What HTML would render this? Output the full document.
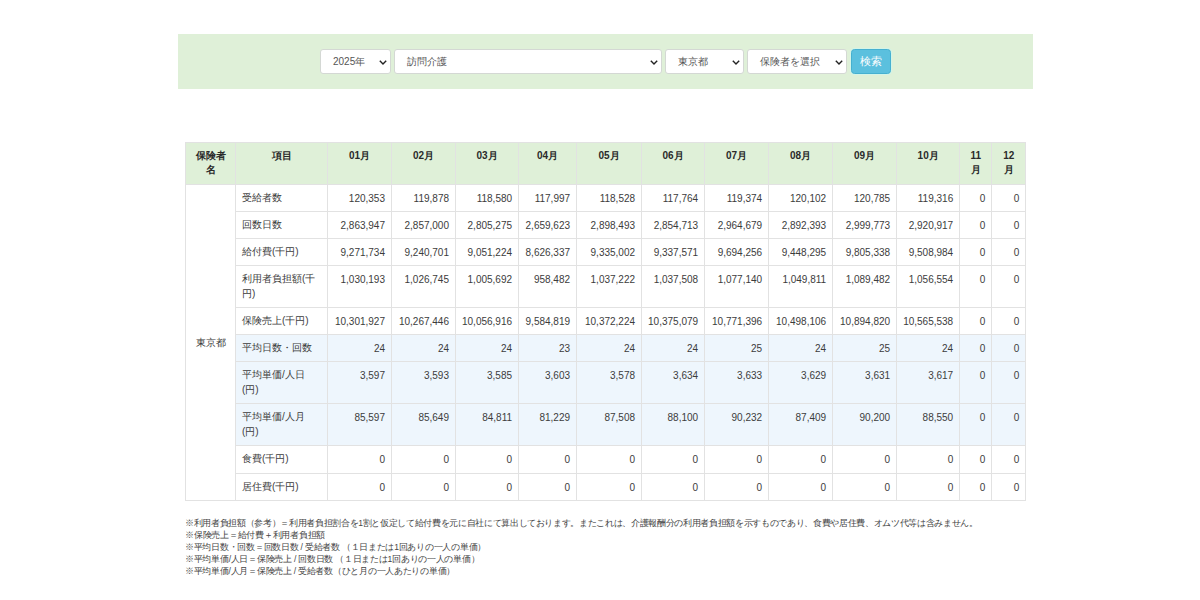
<!DOCTYPE html>
<html><head><meta charset="utf-8">
<style>
*{box-sizing:border-box;margin:0;padding:0}
html,body{width:1200px;height:600px;background:#fff;overflow:hidden}
body{font-family:"Liberation Sans",sans-serif;color:#3c3c3c;position:relative}
.bar{position:absolute;left:178px;top:34px;width:855px;height:55px;background:#dff0d8}
.sel{position:absolute;top:49px;height:25px;background:#fff;border:1px solid #d4d8d4;border-radius:3px;font-size:10px;line-height:23px;color:#555;padding-left:12px;white-space:nowrap}
.sel svg{position:absolute;right:3px;top:9.5px}
.btn{position:absolute;left:851px;top:49px;width:40px;height:25px;background:#5bc0de;border:1px solid #46b0d0;border-radius:3.5px;box-shadow:0 0 0 1px rgba(205,245,240,.7);color:#fff;font-size:10.5px;line-height:23px;text-align:center}
table{position:absolute;left:185px;top:142px;border-collapse:collapse;table-layout:fixed;font-size:10px;line-height:15px}
td,th{border:1px solid #e2e2e2;padding:6px 6px 0 6px;vertical-align:top;overflow:hidden}
th{background:#dff0d8;text-align:center;font-weight:bold;color:#2a2a2a;line-height:14px;padding-top:5.5px}
td.n{text-align:right}
td.l{padding-top:5px}
tr.b td.c{background:#eef6fd}
td.p{text-align:center;vertical-align:middle;padding:0 6px 1px}
.notes{position:absolute;left:185px;top:516.5px;font-size:8.57px;line-height:12.15px;color:#444;white-space:nowrap}
</style></head><body>
<div class="bar"></div>

<div class="sel" style="left:320px;width:71px">2025年<svg width="8" height="5" viewBox="0 0 8 5"><path d="M0.8 0.8 L4 4 L7.2 0.8" fill="none" stroke="#222" stroke-width="1.4"/></svg></div>
<div class="sel" style="left:394px;width:268px">訪問介護<svg width="8" height="5" viewBox="0 0 8 5"><path d="M0.8 0.8 L4 4 L7.2 0.8" fill="none" stroke="#222" stroke-width="1.4"/></svg></div>
<div class="sel" style="left:665px;width:79px">東京都<svg width="8" height="5" viewBox="0 0 8 5"><path d="M0.8 0.8 L4 4 L7.2 0.8" fill="none" stroke="#222" stroke-width="1.4"/></svg></div>
<div class="sel" style="left:747px;width:100px">保険者を選択<svg width="8" height="5" viewBox="0 0 8 5"><path d="M0.8 0.8 L4 4 L7.2 0.8" fill="none" stroke="#222" stroke-width="1.4"/></svg></div>
<div class="btn">検索</div>
<table><colgroup><col style="width:50px"><col style="width:92px"><col style="width:64px"><col style="width:64px"><col style="width:63px"><col style="width:58px"><col style="width:65px"><col style="width:63px"><col style="width:64px"><col style="width:64px"><col style="width:64px"><col style="width:63px"><col style="width:32px"><col style="width:34px"></colgroup>
<tr style="height:42px"><th>保険者<br>名</th><th>項目</th><th>01月</th><th>02月</th><th>03月</th><th>04月</th><th>05月</th><th>06月</th><th>07月</th><th>08月</th><th>09月</th><th>10月</th><th>11<br>月</th><th>12<br>月</th></tr>
<tr style="height:27px"><td class="p" rowspan="10">東京都</td><td class="c l">受給者数</td><td class="n c">120,353</td><td class="n c">119,878</td><td class="n c">118,580</td><td class="n c">117,997</td><td class="n c">118,528</td><td class="n c">117,764</td><td class="n c">119,374</td><td class="n c">120,102</td><td class="n c">120,785</td><td class="n c">119,316</td><td class="n c">0</td><td class="n c">0</td></tr>
<tr style="height:27px"><td class="c l">回数日数</td><td class="n c">2,863,947</td><td class="n c">2,857,000</td><td class="n c">2,805,275</td><td class="n c">2,659,623</td><td class="n c">2,898,493</td><td class="n c">2,854,713</td><td class="n c">2,964,679</td><td class="n c">2,892,393</td><td class="n c">2,999,773</td><td class="n c">2,920,917</td><td class="n c">0</td><td class="n c">0</td></tr>
<tr style="height:27px"><td class="c l">給付費(千円)</td><td class="n c">9,271,734</td><td class="n c">9,240,701</td><td class="n c">9,051,224</td><td class="n c">8,626,337</td><td class="n c">9,335,002</td><td class="n c">9,337,571</td><td class="n c">9,694,256</td><td class="n c">9,448,295</td><td class="n c">9,805,338</td><td class="n c">9,508,984</td><td class="n c">0</td><td class="n c">0</td></tr>
<tr style="height:42px"><td class="c l">利用者負担額(千<br>円)</td><td class="n c">1,030,193</td><td class="n c">1,026,745</td><td class="n c">1,005,692</td><td class="n c">958,482</td><td class="n c">1,037,222</td><td class="n c">1,037,508</td><td class="n c">1,077,140</td><td class="n c">1,049,811</td><td class="n c">1,089,482</td><td class="n c">1,056,554</td><td class="n c">0</td><td class="n c">0</td></tr>
<tr style="height:27px"><td class="c l">保険売上(千円)</td><td class="n c">10,301,927</td><td class="n c">10,267,446</td><td class="n c">10,056,916</td><td class="n c">9,584,819</td><td class="n c">10,372,224</td><td class="n c">10,375,079</td><td class="n c">10,771,396</td><td class="n c">10,498,106</td><td class="n c">10,894,820</td><td class="n c">10,565,538</td><td class="n c">0</td><td class="n c">0</td></tr>
<tr class="b" style="height:27px"><td class="c l">平均日数・回数</td><td class="n c">24</td><td class="n c">24</td><td class="n c">24</td><td class="n c">23</td><td class="n c">24</td><td class="n c">24</td><td class="n c">25</td><td class="n c">24</td><td class="n c">25</td><td class="n c">24</td><td class="n c">0</td><td class="n c">0</td></tr>
<tr class="b" style="height:42px"><td class="c l">平均単価/人日<br>(円)</td><td class="n c">3,597</td><td class="n c">3,593</td><td class="n c">3,585</td><td class="n c">3,603</td><td class="n c">3,578</td><td class="n c">3,634</td><td class="n c">3,633</td><td class="n c">3,629</td><td class="n c">3,631</td><td class="n c">3,617</td><td class="n c">0</td><td class="n c">0</td></tr>
<tr class="b" style="height:42px"><td class="c l">平均単価/人月<br>(円)</td><td class="n c">85,597</td><td class="n c">85,649</td><td class="n c">84,811</td><td class="n c">81,229</td><td class="n c">87,508</td><td class="n c">88,100</td><td class="n c">90,232</td><td class="n c">87,409</td><td class="n c">90,200</td><td class="n c">88,550</td><td class="n c">0</td><td class="n c">0</td></tr>
<tr style="height:28px"><td class="c l">食費(千円)</td><td class="n c">0</td><td class="n c">0</td><td class="n c">0</td><td class="n c">0</td><td class="n c">0</td><td class="n c">0</td><td class="n c">0</td><td class="n c">0</td><td class="n c">0</td><td class="n c">0</td><td class="n c">0</td><td class="n c">0</td></tr>
<tr style="height:27px"><td class="c l">居住費(千円)</td><td class="n c">0</td><td class="n c">0</td><td class="n c">0</td><td class="n c">0</td><td class="n c">0</td><td class="n c">0</td><td class="n c">0</td><td class="n c">0</td><td class="n c">0</td><td class="n c">0</td><td class="n c">0</td><td class="n c">0</td></tr>
</table>
<div class="notes"><div style="letter-spacing:-0.34px">※利用者負担額（参考）＝利用者負担割合を1割と仮定して給付費を元に自社にて算出しております。またこれは、介護報酬分の利用者負担額を示すものであり、食費や居住費、オムツ代等は含みません。</div><div style="letter-spacing:-0.25px">※保険売上＝給付費＋利用者負担額</div><div style="letter-spacing:-0.27px">※平均日数・回数＝回数日数 / 受給者数 （１日または1回ありの一人の単価）</div><div style="letter-spacing:-0.27px">※平均単価/人日＝保険売上 / 回数日数 （１日または1回ありの一人の単価）</div><div style="letter-spacing:-0.28px">※平均単価/人月＝保険売上 / 受給者数（ひと月の一人あたりの単価）</div></div>
</body></html>
